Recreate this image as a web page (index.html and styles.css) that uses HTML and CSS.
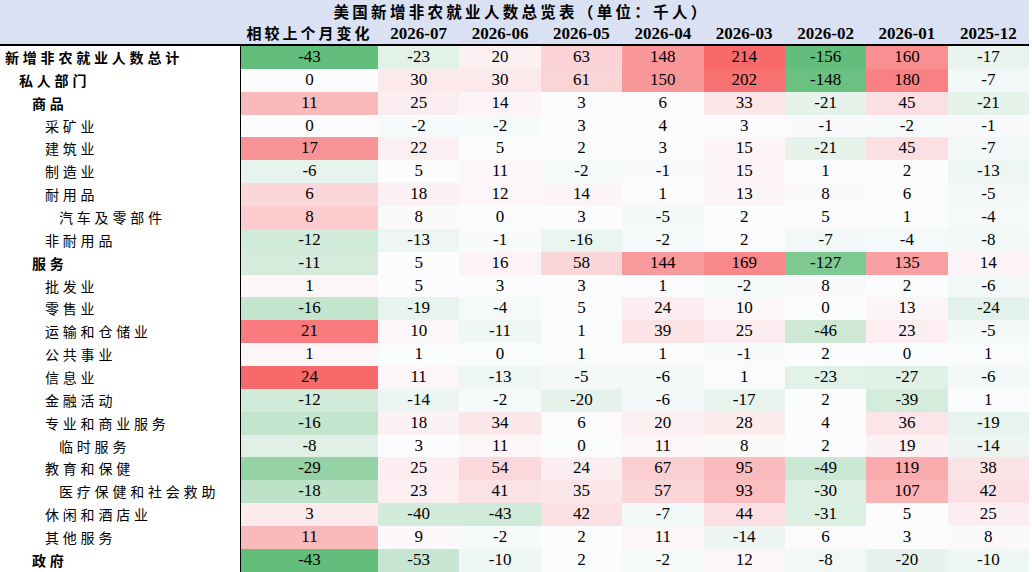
FILE: index.html
```html
<!DOCTYPE html>
<html lang="zh-CN">
<head>
<meta charset="utf-8">
<title>美国新增非农就业人数总览表</title>
<link rel="stylesheet" href="styles.css">
</head>
<body>
<div class="sheet">
  <div class="head">
    <div class="title">美国新增非农就业人数总览表（单位：千人）</div>
    <div class="cols">
      <div class="hc"></div>
      <div class="hc zh">相较上个月变化</div>
      <div class="hc">2026-07</div>
      <div class="hc">2026-06</div>
      <div class="hc">2026-05</div>
      <div class="hc">2026-04</div>
      <div class="hc">2026-03</div>
      <div class="hc">2026-02</div>
      <div class="hc">2026-01</div>
      <div class="hc">2025-12</div>
    </div>
  </div>
  <div class="body">
    <div class="row"><div class="lbl l0 b">新增非农就业人数总计</div><div class="v chg">-43</div><div class="v">-23</div><div class="v">20</div><div class="v">63</div><div class="v">148</div><div class="v">214</div><div class="v">-156</div><div class="v">160</div><div class="v">-17</div></div>
    <div class="row"><div class="lbl l1 b">私人部门</div><div class="v chg">0</div><div class="v">30</div><div class="v">30</div><div class="v">61</div><div class="v">150</div><div class="v">202</div><div class="v">-148</div><div class="v">180</div><div class="v">-7</div></div>
    <div class="row"><div class="lbl l2 b">商品</div><div class="v chg">11</div><div class="v">25</div><div class="v">14</div><div class="v">3</div><div class="v">6</div><div class="v">33</div><div class="v">-21</div><div class="v">45</div><div class="v">-21</div></div>
    <div class="row"><div class="lbl l3">采矿业</div><div class="v chg">0</div><div class="v">-2</div><div class="v">-2</div><div class="v">3</div><div class="v">4</div><div class="v">3</div><div class="v">-1</div><div class="v">-2</div><div class="v">-1</div></div>
    <div class="row"><div class="lbl l3">建筑业</div><div class="v chg">17</div><div class="v">22</div><div class="v">5</div><div class="v">2</div><div class="v">3</div><div class="v">15</div><div class="v">-21</div><div class="v">45</div><div class="v">-7</div></div>
    <div class="row"><div class="lbl l3">制造业</div><div class="v chg">-6</div><div class="v">5</div><div class="v">11</div><div class="v">-2</div><div class="v">-1</div><div class="v">15</div><div class="v">1</div><div class="v">2</div><div class="v">-13</div></div>
    <div class="row"><div class="lbl l3">耐用品</div><div class="v chg">6</div><div class="v">18</div><div class="v">12</div><div class="v">14</div><div class="v">1</div><div class="v">13</div><div class="v">8</div><div class="v">6</div><div class="v">-5</div></div>
    <div class="row"><div class="lbl l4">汽车及零部件</div><div class="v chg">8</div><div class="v">8</div><div class="v">0</div><div class="v">3</div><div class="v">-5</div><div class="v">2</div><div class="v">5</div><div class="v">1</div><div class="v">-4</div></div>
    <div class="row"><div class="lbl l3">非耐用品</div><div class="v chg">-12</div><div class="v">-13</div><div class="v">-1</div><div class="v">-16</div><div class="v">-2</div><div class="v">2</div><div class="v">-7</div><div class="v">-4</div><div class="v">-8</div></div>
    <div class="row"><div class="lbl l2 b">服务</div><div class="v chg">-11</div><div class="v">5</div><div class="v">16</div><div class="v">58</div><div class="v">144</div><div class="v">169</div><div class="v">-127</div><div class="v">135</div><div class="v">14</div></div>
    <div class="row"><div class="lbl l3">批发业</div><div class="v chg">1</div><div class="v">5</div><div class="v">3</div><div class="v">3</div><div class="v">1</div><div class="v">-2</div><div class="v">8</div><div class="v">2</div><div class="v">-6</div></div>
    <div class="row"><div class="lbl l3">零售业</div><div class="v chg">-16</div><div class="v">-19</div><div class="v">-4</div><div class="v">5</div><div class="v">24</div><div class="v">10</div><div class="v">0</div><div class="v">13</div><div class="v">-24</div></div>
    <div class="row"><div class="lbl l3">运输和仓储业</div><div class="v chg">21</div><div class="v">10</div><div class="v">-11</div><div class="v">1</div><div class="v">39</div><div class="v">25</div><div class="v">-46</div><div class="v">23</div><div class="v">-5</div></div>
    <div class="row"><div class="lbl l3">公共事业</div><div class="v chg">1</div><div class="v">1</div><div class="v">0</div><div class="v">1</div><div class="v">1</div><div class="v">-1</div><div class="v">2</div><div class="v">0</div><div class="v">1</div></div>
    <div class="row"><div class="lbl l3">信息业</div><div class="v chg">24</div><div class="v">11</div><div class="v">-13</div><div class="v">-5</div><div class="v">-6</div><div class="v">1</div><div class="v">-23</div><div class="v">-27</div><div class="v">-6</div></div>
    <div class="row"><div class="lbl l3">金融活动</div><div class="v chg">-12</div><div class="v">-14</div><div class="v">-2</div><div class="v">-20</div><div class="v">-6</div><div class="v">-17</div><div class="v">2</div><div class="v">-39</div><div class="v">1</div></div>
    <div class="row"><div class="lbl l3">专业和商业服务</div><div class="v chg">-16</div><div class="v">18</div><div class="v">34</div><div class="v">6</div><div class="v">20</div><div class="v">28</div><div class="v">4</div><div class="v">36</div><div class="v">-19</div></div>
    <div class="row"><div class="lbl l4">临时服务</div><div class="v chg">-8</div><div class="v">3</div><div class="v">11</div><div class="v">0</div><div class="v">11</div><div class="v">8</div><div class="v">2</div><div class="v">19</div><div class="v">-14</div></div>
    <div class="row"><div class="lbl l3">教育和保健</div><div class="v chg">-29</div><div class="v">25</div><div class="v">54</div><div class="v">24</div><div class="v">67</div><div class="v">95</div><div class="v">-49</div><div class="v">119</div><div class="v">38</div></div>
    <div class="row"><div class="lbl l4">医疗保健和社会救助</div><div class="v chg">-18</div><div class="v">23</div><div class="v">41</div><div class="v">35</div><div class="v">57</div><div class="v">93</div><div class="v">-30</div><div class="v">107</div><div class="v">42</div></div>
    <div class="row"><div class="lbl l3">休闲和酒店业</div><div class="v chg">3</div><div class="v">-40</div><div class="v">-43</div><div class="v">42</div><div class="v">-7</div><div class="v">44</div><div class="v">-31</div><div class="v">5</div><div class="v">25</div></div>
    <div class="row"><div class="lbl l3">其他服务</div><div class="v chg">11</div><div class="v">9</div><div class="v">-2</div><div class="v">2</div><div class="v">11</div><div class="v">-14</div><div class="v">6</div><div class="v">3</div><div class="v">8</div></div>
    <div class="row"><div class="lbl l2 b">政府</div><div class="v chg">-43</div><div class="v">-53</div><div class="v">-10</div><div class="v">2</div><div class="v">-2</div><div class="v">12</div><div class="v">-8</div><div class="v">-20</div><div class="v">-10</div></div>
  </div>
</div>
<script src="script.js"></script>
</body>
</html>
```

FILE: styles.css
```css
html, body {
  margin: 0;
  padding: 0;
  background: #ffffff;
}

body {
  font-family: "Liberation Serif", "Noto Sans CJK SC", serif;
  color: #000000;
}

.sheet {
  width: 1029px;
}

.head {
  background: #d9e1f2;
  border-bottom: 2px solid #000000;
}

.title {
  height: 22px;
  line-height: 23px;
  text-align: center;
  font-family: "Noto Sans CJK SC", sans-serif;
  font-weight: 700;
  font-size: 15.5px;
  letter-spacing: 3.3px;
  text-spacing-trim: space-all;
  font-feature-settings: "chws" 0, "halt" 0, "palt" 0;
  padding-left: 14px;
}

.cols,
.row {
  display: grid;
  grid-template-columns: 241px 137px repeat(8, 81.375px);
}

.cols {
  height: 22px;
}

.hc {
  text-align: center;
  font-weight: 700;
  font-size: 17px;
  line-height: 23px;
}

.hc.zh {
  font-family: "Noto Sans CJK SC", sans-serif;
  font-size: 15px;
  letter-spacing: 3px;
  line-height: 22px;
}

.body {
  display: grid;
  grid-auto-rows: 22.87px;
}

.lbl {
  border-right: 1px solid #000000;
  font-family: "Noto Sans CJK SC", sans-serif;
  font-size: 14px;
  letter-spacing: 3.8px;
  line-height: 22px;
  white-space: nowrap;
}

.lbl.b {
  font-weight: 700;
}

.l0 { padding-left: 5px; }
.l1 { padding-left: 19px; }
.l2 { padding-left: 32px; }
.l3 { padding-left: 45px; }
.l4 { padding-left: 59px; }

.v {
  text-align: center;
  font-size: 17px;
  line-height: 22px;
  background: #fcfcff;
}
```

FILE: script.js
```js
(function () {
  var LOW = [99, 190, 123];
  var MID = [252, 252, 255];
  var HIGH = [248, 105, 107];

  function percentile(sorted, p) {
    var r = p * (sorted.length - 1);
    var lo = Math.floor(r);
    var hi = Math.ceil(r);
    return sorted[lo] + (sorted[hi] - sorted[lo]) * (r - lo);
  }

  function mix(a, b, t) {
    return [0, 1, 2].map(function (i) {
      return Math.round(a[i] + (b[i] - a[i]) * t);
    });
  }

  function scaleFor(values) {
    var s = values.slice().sort(function (a, b) { return a - b; });
    var min = s[0], max = s[s.length - 1], mid = percentile(s, 0.5);
    return function (v) {
      var c;
      if (v <= mid) {
        c = mix(LOW, MID, mid === min ? 1 : (v - min) / (mid - min));
      } else {
        c = mix(MID, HIGH, max === mid ? 0 : (v - mid) / (max - mid));
      }
      return 'rgb(' + c.join(',') + ')';
    };
  }

  var chg = Array.prototype.slice.call(document.querySelectorAll('.v.chg'));
  var rest = Array.prototype.slice.call(document.querySelectorAll('.v:not(.chg)'));

  function apply(cells) {
    var vals = cells.map(function (c) { return parseFloat(c.textContent); });
    var f = scaleFor(vals);
    cells.forEach(function (c, i) { c.style.backgroundColor = f(vals[i]); });
  }

  apply(chg);
  apply(rest);
})();
```
